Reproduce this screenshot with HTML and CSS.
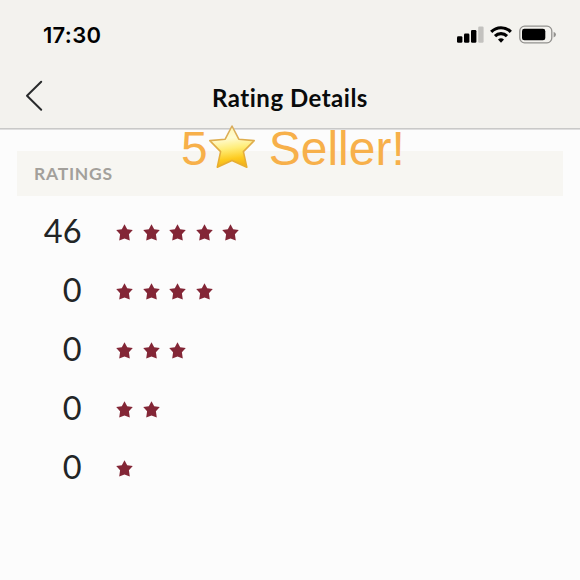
FILE: index.html
```html
<!DOCTYPE html>
<html lang="en">
<head>
<meta charset="utf-8">
<title>Rating Details</title>
<link rel="stylesheet" href="styles.css">
</head>
<body>
<svg class="defs" aria-hidden="true"><symbol id="star" viewBox="0 0 17 17"><path d="M8.5 0.2 11.2 5.3 16.8 6.1 12.9 10.3 13.8 16.5 8.5 14.4 3.2 16.5 4.1 10.3 0.2 6.1 5.8 5.3Z"/></symbol></svg>
<header class="header">
  <div class="status">
    <span class="time">17:30</span>
    <svg class="indicators" viewBox="0 0 101 20">
      <rect x="0" y="11.3" width="5.4" height="6.5" rx="1.3"/>
      <rect x="7" y="8.5" width="5.4" height="9.3" rx="1.3"/>
      <rect x="14" y="5" width="5.4" height="12.8" rx="1.3"/>
      <rect x="21.2" y="1.5" width="5.4" height="16.3" rx="1.3" fill="#c3c2bf"/>
      <g fill="none" stroke="#000" stroke-width="3.1">
        <path d="M34.2 6.9C39.6 1.3 48.4 1.3 53.8 6.9"/>
        <path d="M38 11.1C41.3 7.8 46.7 7.8 50 11.1"/>
      </g>
      <path d="M41 14.4Q44 12 47 14.4L44 17.7Z"/>
      <rect x="62.8" y="1.2" width="32" height="16.6" rx="4.8" fill="none" stroke="#92918e" stroke-width="1.3"/>
      <rect x="65" y="3.8" width="23.3" height="11.5" rx="2.4"/>
      <path d="M96.6 6.8Q99 7.7 99 9.6Q99 11.5 96.6 12.4Z" fill="#92918e"/>
    </svg>
  </div>
  <div class="nav">
    <svg class="back" viewBox="0 0 18 32"><path d="M16.2 1.8 2 15.8 16.2 29.8"/></svg>
    <h1 class="title">Rating Details</h1>
  </div>
</header>
<main class="content">
  <h2 class="section">RATINGS</h2>
  <div class="row"><span class="count">46</span><div class="stars"><svg><use href="#star"/></svg><svg><use href="#star"/></svg><svg><use href="#star"/></svg><svg><use href="#star"/></svg><svg><use href="#star"/></svg></div></div>
  <div class="row"><span class="count">0</span><div class="stars"><svg><use href="#star"/></svg><svg><use href="#star"/></svg><svg><use href="#star"/></svg><svg><use href="#star"/></svg></div></div>
  <div class="row"><span class="count">0</span><div class="stars"><svg><use href="#star"/></svg><svg><use href="#star"/></svg><svg><use href="#star"/></svg></div></div>
  <div class="row"><span class="count">0</span><div class="stars"><svg><use href="#star"/></svg><svg><use href="#star"/></svg></div></div>
  <div class="row"><span class="count">0</span><div class="stars"><svg><use href="#star"/></svg></div></div>
</main>
<div class="caption">
  <span>5</span>
  <svg class="gold" viewBox="0 0 48 46">
    <defs>
      <linearGradient id="fill" x1="0" y1="0" x2="0.15" y2="1"><stop offset="0" stop-color="#fff5a8"/><stop offset=".35" stop-color="#fffbd1"/><stop offset=".6" stop-color="#ffed78"/><stop offset=".85" stop-color="#fdcb20"/><stop offset="1" stop-color="#f3b51b"/></linearGradient>
      <linearGradient id="edge" x1="0" y1="0" x2="0" y2="1"><stop offset="0" stop-color="#d9ad60"/><stop offset="1" stop-color="#e9ae2c"/></linearGradient>
    </defs>
    <path d="M24 2 30.8 15.2 46.2 16.6 35.4 27.6 38.8 43.2 24 36.4 9.3 43.2 12.6 27.6 1.8 16.6 17.2 15.2Z" fill="url(#fill)" stroke="url(#edge)" stroke-width="1.6" stroke-linejoin="round"/>
  </svg>
  <span class="seller">Seller!</span>
</div>
</body>
</html>
```
FILE: styles.css
```css
* { box-sizing: border-box; }
body {
  margin: 0;
  width: 580px;
  height: 580px;
  overflow: hidden;
  position: relative;
  background: #fcfcfc;
  font-family: Lato, sans-serif;
  color: #222526;
}
.defs { position: absolute; width: 0; height: 0; }
.header {
  height: 130px;
  background: #f3f2ee;
  border-bottom: 1px solid #dedede;
  box-shadow: inset 0 -1px #c9c9c8;
}
.status {
  height: 70px;
  display: flex;
  justify-content: space-between;
  padding: 0 22px 0 43px;
}
.time {
  font: 600 22px/70px Inter, sans-serif;
  letter-spacing: 0.3px;
  color: #000;
}
.indicators { width: 101px; height: 20px; margin-top: 25px; }
.nav {
  height: 58px;
  display: grid;
  grid-template-columns: 60px 1fr 60px;
}
.back {
  width: 18px;
  height: 32px;
  margin: 10px 0 0 25px;
  fill: none;
  stroke: #292b2c;
  stroke-width: 2;
  stroke-linecap: round;
  stroke-linejoin: round;
}
.title {
  margin: 0;
  text-align: center;
  font-size: 24px;
  line-height: 56px;
  font-weight: 700;
  letter-spacing: 0.5px;
  font-variant-ligatures: none;
  color: #090b0b;
}
.content { padding: 21px 17px 0; }
.section {
  margin: 0 0 6px;
  height: 45px;
  padding-left: 17px;
  background: #f7f6f2;
  font-size: 17.5px;
  line-height: 45px;
  font-weight: 700;
  letter-spacing: 0.75px;
  color: #a3a09b;
}
.row { height: 59px; display: flex; align-items: center; }
.count { width: 64.5px; text-align: right; font-size: 32.5px; line-height: 56px; margin-top: -2px; }
.stars { display: flex; gap: 9.6px; margin: 1px 0 0 34.5px; }
.stars svg { width: 17px; height: 17px; fill: #832636; }
.caption {
  position: absolute;
  left: 181px;
  top: 121px;
  display: flex;
  font: 48px/56px "Liberation Sans", sans-serif;
  color: #f7b04a;
}
.gold { width: 48px; height: 46px; margin: 3px 0 0; }
.seller { margin-left: 13px; }
```
